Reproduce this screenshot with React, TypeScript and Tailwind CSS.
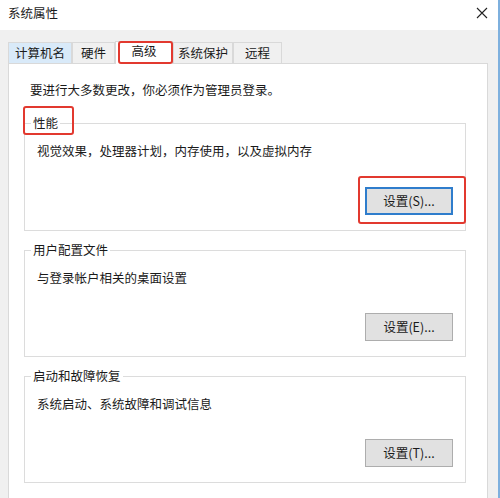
import React from "react";

const RedBox = ({ className }: { className: string }) => (
  <div className={`pointer-events-none absolute border-[2.5px] border-[#e2392f] rounded-[3px] ${className}`} />
);

const Group = ({
  label,
  text,
  button,
  h,
  labelBox,
  btnBox,
  primary,
}: {
  label: string;
  text: string;
  button: string;
  h: string;
  labelBox?: boolean;
  btnBox?: boolean;
  primary?: boolean;
}) => (
  <div className={`border border-[#dcdcdc] flex flex-col ${h}`}>
    <span className="relative -mt-[9px] ml-[6px] px-[2px] bg-white w-fit leading-[16px]">
      {label}
      {labelBox && <RedBox className="-left-[8px] -right-[14px] -top-[9px] -bottom-[4px]" />}
    </span>
    <p className="mt-[12px] ml-[12px] leading-[16px]">{text}</p>
    <div className="mt-auto mb-[15px] mr-[12px] self-end relative">
      <button
        className={`w-[88px] h-[28px] flex items-center justify-center bg-[#e1e1e1] ${
          primary ? "border-2 border-[#2f7dcc]" : "border border-[#adadad]"
        }`}
      >
        {button}
      </button>
      {btnBox && <RedBox className="-left-[7px] -right-[13px] -top-[11px] -bottom-[9px]" />}
    </div>
  </div>
);

export default function App() {
  const tabs = [
    { t: "计算机名", w: "w-[64px]", hover: true },
    { t: "硬件", w: "w-[43px]" },
    { t: "高级", w: "w-[58px]", sel: true },
    { t: "系统保护", w: "w-[60px]" },
    { t: "远程", w: "w-[49px]" },
  ];
  return (
    <div className="w-[500px] h-[498px] flex overflow-hidden text-[12.5px] text-[#1a1a1a] font-['Noto_Sans_CJK_SC','Noto_Sans',sans-serif]">
      <div className="flex-1 flex flex-col">
        <div className="h-[30px] bg-white flex items-center justify-between pl-[8px] pr-[10px] shrink-0">
          <span className="leading-[16px] -mt-[4px]">系统属性</span>
          <svg width="12" height="12" viewBox="0 0 12 12" className="-mt-[4px]">
            <path d="M1 1 L11 11 M11 1 L1 11" stroke="#222" strokeWidth="1.1" />
          </svg>
        </div>
        <div className="flex-1 bg-[#f0f0f0] pl-[8px] pr-[10px] pt-[11px] flex flex-col min-h-0">
          <div className="flex items-end h-[22px] relative z-10">
            {tabs.map((tb) =>
              tb.sel ? (
                <div
                  key={tb.t}
                  className={`${tb.w} relative h-[23px] -mb-[1px] bg-white border border-b-0 border-[#d9d9d9] flex justify-center pt-[1px] leading-[16px]`}
                >
                  {tb.t}
                  <RedBox className="left-[2px] -right-[1px] -top-[1px] bottom-[0px]" />
                </div>
              ) : (
                <div
                  key={tb.t}
                  className={`${tb.w} h-[21px] border border-b-0 border-[#d9d9d9] flex items-center justify-center leading-[16px] ${
                    tb.hover ? "bg-[#d9eaf9]" : "bg-[#f0f0f0]"
                  }`}
                >
                  {tb.t}
                </div>
              )
            )}
          </div>
          <div className="flex-1 bg-white border border-b-0 border-[#d9d9d9] pl-[15px] pr-[21px] pt-[18px] flex flex-col">
            <p className="ml-[6px] leading-[16px]">要进行大多数更改，你必须作为管理员登录。</p>
            <div className="mt-[25px]">
              <Group
                label="性能"
                text="视觉效果，处理器计划，内存使用，以及虚拟内存"
                button="设置(S)..."
                h="h-[108px]"
                labelBox
                btnBox
                primary
              />
            </div>
            <div className="mt-[19px]">
              <Group label="用户配置文件" text="与登录帐户相关的桌面设置" button="设置(E)..." h="h-[107px]" />
            </div>
            <div className="mt-[19px]">
              <Group label="启动和故障恢复" text="系统启动、系统故障和调试信息" button="设置(T)..." h="h-[107px]" />
            </div>
          </div>
        </div>
      </div>
      <div className="w-[2px] bg-[#7eb0de] shrink-0" />
    </div>
  );
}
